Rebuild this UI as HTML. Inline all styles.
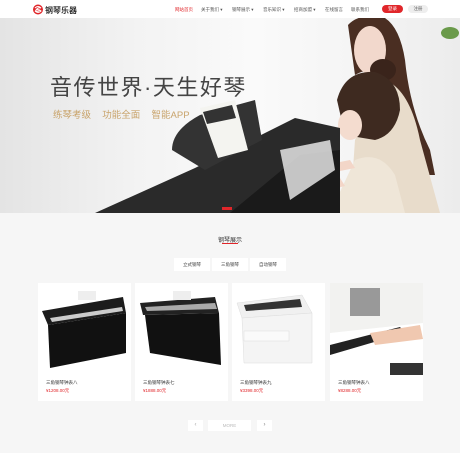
<!DOCTYPE html>
<html><head><meta charset="utf-8"><style>
*{margin:0;padding:0;box-sizing:border-box}
body{width:460px;height:466px;overflow:hidden;background:#fff;font-family:"Liberation Sans","Noto Sans CJK SC",sans-serif;position:relative}
.a{position:absolute}
.nav{font-size:4.5px;color:#555;top:7px;white-space:nowrap}
.card{position:absolute;top:283px;width:93px;height:118px;background:#fff}
.card .n{position:absolute;left:8px;top:97px;font-size:4.5px;color:#333}
.card .p{position:absolute;left:8px;top:105px;font-size:4.5px;color:#e0262a}
.tab{position:absolute;top:258px;width:36px;height:13px;background:#fff;font-size:4.5px;color:#444;text-align:center;line-height:13px}
</style></head><body>
<svg class="a" style="left:32px;top:4px" width="12" height="11" viewBox="0 0 12 11"><circle cx="6" cy="5.5" r="5" fill="#e0262a"/><path d="M3 4 Q6 1 9 4 Q6 3 4 6 Q7 5 9 7 Q6 10 3 7 Q6 8 8 6" stroke="#fff" stroke-width="1" fill="none"/></svg>
<div class="a" style="left:45px;top:5px;font-size:8px;font-weight:bold;color:#333">钢琴乐器</div>
<div class="a nav" style="left:175px;color:#e0262a">网站首页</div>
<div class="a nav" style="left:201px">关于我们 ▾</div>
<div class="a nav" style="left:232px">钢琴展示 ▾</div>
<div class="a nav" style="left:263px">音乐知识 ▾</div>
<div class="a nav" style="left:294px">招商加盟 ▾</div>
<div class="a nav" style="left:325px">在线留言</div>
<div class="a nav" style="left:351px">联系我们</div>
<div class="a" style="left:382px;top:5px;width:21px;height:8px;border-radius:4px;background:#e0262a;color:#fff;font-size:4.5px;text-align:center;line-height:8px">登录</div>
<div class="a" style="left:408px;top:5px;width:20px;height:8px;border-radius:4px;background:#eee;color:#666;font-size:4.5px;text-align:center;line-height:8px">注册</div>
<div class="a" style="left:0;top:18px;width:460px;height:195px;background:linear-gradient(90deg,#e4e4e4 0%,#f3f3f3 30%,#fafafa 55%,#f4f4f4 80%,#ececec 100%)"></div>
<svg class="a" style="left:0;top:18px" width="460" height="195" viewBox="0 18 460 195">
<path d="M348 25 Q360 12 385 18 Q400 28 405 60 Q410 110 430 150 L435 175 L400 175 L395 100 Q380 60 355 75 Z" fill="#4a2e22"/>
<ellipse cx="370" cy="50" rx="16" ry="24" fill="#f2d8cc"/>
<path d="M385 80 Q410 90 420 140 L440 213 L350 213 L355 140 Z" fill="#e8dccb"/>
<path d="M355 160 Q380 150 395 175 L405 213 L330 213 Z" fill="#efe6d8"/>
<ellipse cx="383" cy="70" rx="13" ry="11" fill="#3a241b"/>
<path d="M337 100 Q345 70 375 72 Q400 80 400 110 Q395 135 375 140 L345 135 Z" fill="#3e2a20"/>
<ellipse cx="350" cy="125" rx="12" ry="15" fill="#f4dccf"/>
<path d="M300 170 L350 160 L355 168 L305 178 Z" fill="#f3d6c8"/>
<path d="M290 190 L340 178 L345 186 L295 198 Z" fill="#f3d6c8"/>
<path d="M95 213 L195 168 L295 118 L340 128 L340 213 Z" fill="#2a2a2a"/>
<path d="M230 213 L300 155 L340 150 L340 213 Z" fill="#1a1a1a"/>
<path d="M280 150 L330 140 L335 170 L290 200 Z" fill="#f0f0f0" opacity=".8"/>
<path d="M172 150 Q172 130 200 115 L255 100 L262 140 L205 170 Z" fill="#333"/>
<path d="M200 108 L235 100 L248 150 L218 158 Z" fill="#f4f4f0"/>
<path d="M203 112 L232 105 L236 118 L207 124 Z" fill="#333"/>
<rect x="222" y="207" width="10" height="3" fill="#e0262a"/>
<ellipse cx="450" cy="33" rx="9" ry="6" fill="#6a9a4a"/>
</svg>
<div class="a" style="left:50px;top:70px;font-size:22px;color:#444;letter-spacing:1.5px;white-space:nowrap">音传世界·天生好琴</div>
<div class="a" style="left:53px;top:107px;font-size:9.5px;color:#c9a46c;white-space:nowrap;word-spacing:3px">练琴考级&nbsp; 功能全面&nbsp; 智能APP</div>
<div class="a" style="left:0;top:213px;width:460px;height:240px;background:#f6f6f6"></div>
<div class="a" style="left:0;top:235px;width:460px;text-align:center;font-size:6px;color:#333">钢琴展示</div>
<div class="a" style="left:222px;top:243px;width:16px;height:1px;background:#e0262a"></div>
<div class="tab" style="left:174px">立式钢琴</div>
<div class="tab" style="left:212px">三角钢琴</div>
<div class="tab" style="left:250px">自动钢琴</div>
<div class="card" style="left:38px"><svg width="93" height="92" viewBox="0 0 93 92"><path d="M4 28 L85 14 L88 30 L10 42 Z" fill="#1c1c1c"/><path d="M10 42 L88 30 L88 70 L12 85 Z" fill="#111"/><rect x="40" y="8" width="18" height="9" fill="#eee"/><path d="M12 35 L84 24 L85 28 L14 39Z" fill="#ccc"/></svg><div class="n">三角钢琴钟表八</div><div class="p">¥1208.00元</div></div>
<div class="card" style="left:135px"><svg width="93" height="92" viewBox="0 0 93 92"><path d="M5 20 L80 14 L84 30 L8 32 Z" fill="#222"/><path d="M10 32 L84 30 L86 82 L15 70 Z" fill="#111"/><rect x="38" y="8" width="18" height="9" fill="#eee"/><path d="M10 24 L80 20 L82 26 L12 28Z" fill="#aaa"/></svg><div class="n">三角钢琴钟表七</div><div class="p">¥1888.00元</div></div>
<div class="card" style="left:232px"><svg width="93" height="92" viewBox="0 0 93 92"><path d="M5 20 L70 12 L80 30 L10 35 Z" fill="#f0f0f0" stroke="#ddd" stroke-width=".5"/><path d="M10 35 L80 30 L80 80 L12 80 Z" fill="#f4f4f4" stroke="#ddd" stroke-width=".5"/><path d="M12 22 L68 16 L70 24 L14 28Z" fill="#333"/><rect x="12" y="48" width="45" height="10" fill="#fafafa" stroke="#ddd" stroke-width=".5"/></svg><div class="n">三角钢琴钟表九</div><div class="p">¥3398.00元</div></div>
<div class="card" style="left:330px"><svg width="93" height="92" viewBox="0 0 93 92"><rect width="93" height="92" fill="#f2f2f0"/><rect x="20" y="5" width="30" height="28" fill="#999"/><path d="M0 50 L93 40 L93 92 L0 92 Z" fill="#fff"/><path d="M0 62 L70 44 L75 50 L0 72Z" fill="#222"/><path d="M40 50 L90 42 L93 56 L45 62Z" fill="#f0c8b0"/><rect x="60" y="80" width="33" height="12" fill="#333"/></svg><div class="n">三角钢琴钟表八</div><div class="p">¥8288.00元</div></div>
<div class="a" style="left:188px;top:420px;width:15px;height:11px;background:#fff;font-size:6px;color:#aaa;text-align:center;line-height:11px">‹</div>
<div class="a" style="left:208px;top:420px;width:43px;height:11px;background:#fff;font-size:4.5px;color:#bbb;text-align:center;line-height:11px">MORE</div>
<div class="a" style="left:257px;top:420px;width:15px;height:11px;background:#fff;font-size:6px;color:#888;text-align:center;line-height:11px">›</div>
</body></html>
